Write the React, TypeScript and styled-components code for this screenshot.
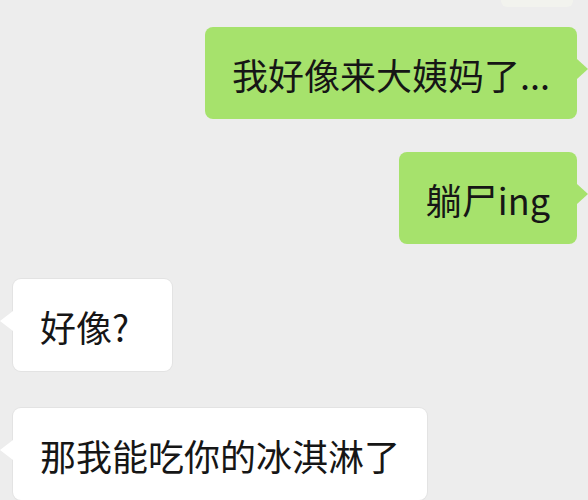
import React from 'react';
import styled, { createGlobalStyle, css } from 'styled-components';

const GlobalStyle = createGlobalStyle`
    html, body {
        margin: 0;
        padding: 0;
        background: #ededed;
    }
    body {
        font-family: "Noto Sans CJK SC", "Noto Sans", sans-serif;
    }
`;

const Thread = styled.div`
    width: 588px;
    height: 500px;
    overflow: hidden;
    display: flex;
    flex-direction: column;
    box-sizing: border-box;
    padding: 0 11px 0 13px;
    background: #ededed;
`;

// bottom edge of the previous (cut off) message
const Peek = styled.div`
    align-self: flex-end;
    width: 72px;
    height: 7px;
    margin-right: 4px;
    border-radius: 0 0 6px 6px;
    background: #f2f3ee;
`;

const Row = styled.div<{ $mine?: boolean; $top: number }>`
    display: flex;
    justify-content: ${p => (p.$mine ? 'flex-end' : 'flex-start')};
    margin-top: ${p => p.$top}px;
`;

const Bubble = styled.div<{ $mine?: boolean; $padRight?: number }>`
    position: relative;
    box-sizing: border-box;
    height: 92px;
    padding: 26px ${p => p.$padRight ?? 27}px 26px 27px;
    border-radius: 8px;
    font-size: 36px;
    line-height: 42px;
    color: #161616;
    white-space: nowrap;

    &::after {
        content: '';
        position: absolute;
        top: 32px;
        width: 0;
        height: 0;
        border-top: 10px solid transparent;
        border-bottom: 10px solid transparent;
    }

    ${p => p.$mine
        ? css`
            background: #a6e26c;
            &::after {
                right: -11px;
                border-left: 11px solid #a6e26c;
            }
        `
        : css`
            background: #ffffff;
            box-shadow: 0 0 0 1px #e3e3e3;
            &::after {
                left: -13px;
                border-right: 13px solid #ffffff;
            }
        `}
`;

const messages = [
    { text: '我好像来大姨妈了...', mine: true, top: 20 },
    { text: '躺尸ing', mine: true, top: 33 },
    { text: '好像?', mine: false, top: 35, padRight: 43 },
    { text: '那我能吃你的冰淇淋了', mine: false, top: 37 },
];

const App: React.FC = () => {
    return (
        <>
            <GlobalStyle />
            <Thread>
                <Peek />
                {messages.map((m, i) => (
                    <Row key={i} $mine={m.mine} $top={m.top}>
                        <Bubble $mine={m.mine} $padRight={m.padRight}>{m.text}</Bubble>
                    </Row>
                ))}
            </Thread>
        </>
    );
};

export default App;
